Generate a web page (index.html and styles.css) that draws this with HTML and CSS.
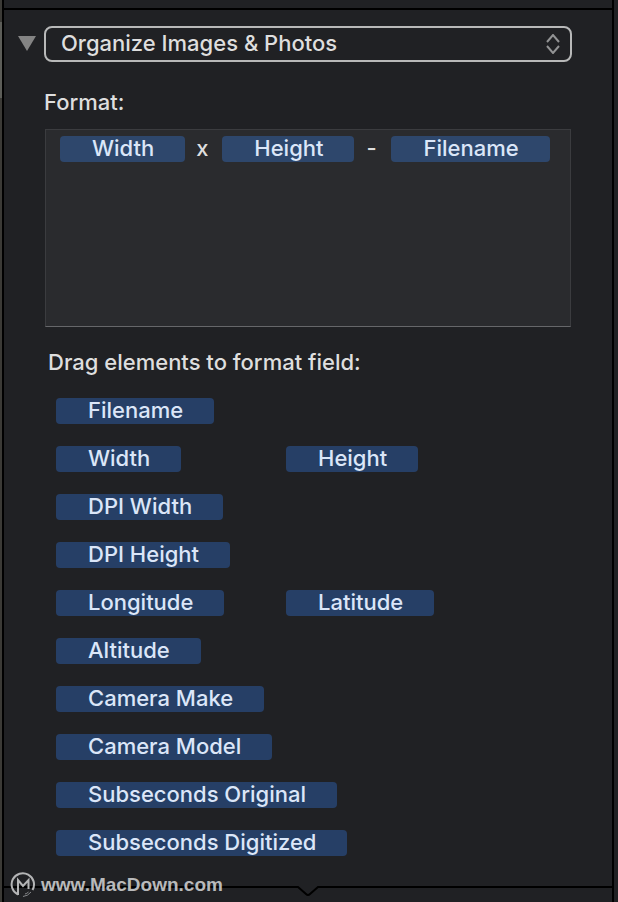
FILE: index.html
```html
<!DOCTYPE html>
<html lang="en">
<head>
<meta charset="utf-8">
<title>Organize Images &amp; Photos</title>
<link rel="stylesheet" href="styles.css">
</head>
<body>
<div class="window">
  <div class="edge"><span class="edge-thumb"></span></div>
  <main class="panel">
    <div class="panel-top"></div>
    <section class="step">
      <header class="step-header">
        <button class="disclosure" type="button" aria-label="Collapse">
          <svg width="18" height="16" viewBox="0 0 18 16"><path d="M0 0H18L9 15Z" fill="#848484"/></svg>
        </button>
        <div class="picker">
          <select class="picker-select" aria-label="Action">
            <option>Organize Images &amp; Photos</option>
          </select>
          <svg class="picker-arrows" width="14" height="20" viewBox="0 0 14 20" fill="none" stroke="#929394" stroke-width="2"><path d="M1 8L7 1L13 8M1 12L7 19L13 12"/></svg>
        </div>
      </header>
      <div class="format">
        <span class="label" id="format-label">Format:</span>
        <div class="field" role="textbox" tabindex="0" aria-labelledby="format-label">
          <span class="token">Width</span><span class="literal">x</span><span class="token">Height</span><span class="literal">-</span><span class="token">Filename</span>
        </div>
      </div>
      <div class="elements">
        <h2 class="label">Drag elements to format field:</h2>
        <div class="palette">
          <button class="token wide" type="button" draggable="true">Filename</button>
          <button class="token" type="button" draggable="true">Width</button>
          <button class="token" type="button" draggable="true">Height</button>
          <button class="token wide" type="button" draggable="true">DPI Width</button>
          <button class="token wide" type="button" draggable="true">DPI Height</button>
          <button class="token" type="button" draggable="true">Longitude</button>
          <button class="token" type="button" draggable="true">Latitude</button>
          <button class="token wide" type="button" draggable="true">Altitude</button>
          <button class="token wide" type="button" draggable="true">Camera Make</button>
          <button class="token wide" type="button" draggable="true">Camera Model</button>
          <button class="token wide" type="button" draggable="true">Subseconds Original</button>
          <button class="token wide" type="button" draggable="true">Subseconds Digitized</button>
        </div>
      </div>
    </section>
    <div class="divider">
      <span class="rule"></span>
      <svg width="24" height="11" viewBox="0 0 24 11" fill="none" stroke="#000" stroke-width="2"><path d="M0 1H2L10 8Q12 10 14 8L22 1H24"/></svg>
      <span class="rule"></span>
    </div>
  </main>
  <div class="gutter"></div>
  <div class="watermark">
    <svg width="26" height="26" viewBox="0 0 26 26" fill="none" stroke="#b4b5b6" stroke-width="2"><path d="M8 22.500A11.200 11.200 0 1 1 22.500 18"/><path d="M8 23V8L13 14L18.500 8V17"/><path d="M13 24.500Q18 24 21 20M15 22Q17 21.500 18.500 20" stroke-width="1" stroke="#85878a"/></svg>
    <span>www.MacDown.com</span>
  </div>
</div>
</body>
</html>
```
FILE: styles.css
```css
* {
  box-sizing: border-box;
}

body {
  margin: 0;
  background: #202124;
  color: #dedede;
  font: 500 22px/26px Inter, "Liberation Sans", sans-serif;
}

button,
select {
  margin: 0;
  padding: 0;
  border: 0;
  background: none;
  color: inherit;
  font: inherit;
}

svg {
  display: block;
}

.window {
  position: relative;
  display: flex;
  min-height: 100vh;
}

.edge {
  width: 4px;
  padding-top: 22px;
  border-right: 2px solid #000;
  background: #3b3a36;
}

.edge-thumb {
  display: block;
  height: 76px;
  background: #5c5d58;
}

.panel {
  flex: 1;
  min-width: 0;
}

.panel-top {
  height: 10px;
  border-bottom: 2px solid #000;
}

.step {
  padding: 16px 40px 30px 14px;
}

.step-header {
  display: flex;
  align-items: center;
  gap: 8px;
}

.picker {
  position: relative;
  flex: 1;
}

.picker-select {
  display: block;
  width: 100%;
  height: 36px;
  padding: 0 40px 2px 15px;
  border: 2px solid #b8b9b9;
  border-radius: 8px;
  appearance: none;
}

.picker-arrows {
  position: absolute;
  top: 8px;
  right: 12px;
  pointer-events: none;
}

.format {
  margin: 27px 0 0 26px;
}

.label {
  display: block;
  margin: 0;
  font-size: 22px;
  font-weight: 500;
}

.field {
  display: flex;
  align-items: flex-start;
  height: 198px;
  margin: 14px 1px 0;
  padding: 6px 14px;
  border: 1px solid #3b3c3f;
  border-bottom-color: #66676a;
  background: #2a2b2e;
}

.token {
  height: 26px;
  padding: 0 31px 2px 32px;
  border-radius: 4px;
  background: #263f66;
  color: #dbe6f8;
  font-weight: 450;
  line-height: 24px;
  white-space: nowrap;
}

.field .token {
  background: #2e476c;
}

.literal {
  width: 37px;
  padding-right: 3px;
  line-height: 24px;
  text-align: center;
}

.elements {
  margin: 22px 0 0 30px;
}

.palette {
  display: grid;
  grid-template-columns: 230px 1fr;
  justify-items: start;
  gap: 22px 0;
  margin: 23px 0 0 8px;
}

.wide {
  grid-column: 1 / -1;
}

.divider {
  display: flex;
}

.rule {
  flex: 1;
  height: 2px;
  background: #000;
}

.gutter {
  width: 6px;
  border-left: 2px solid #000;
}

.watermark {
  position: absolute;
  bottom: 4px;
  left: 10px;
  display: flex;
  align-items: center;
  gap: 5px;
  color: #b9babb;
  font: bold 19px/26px "Liberation Sans", sans-serif;
}
```
